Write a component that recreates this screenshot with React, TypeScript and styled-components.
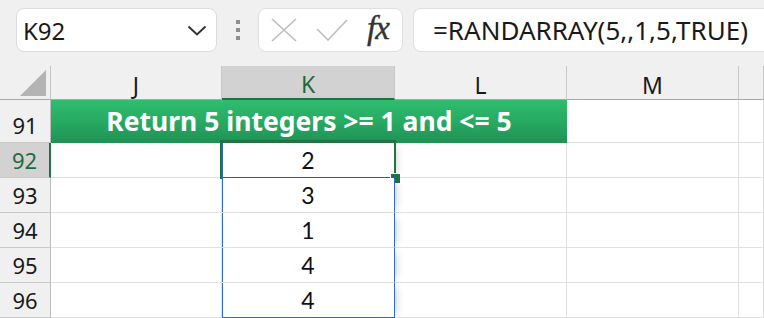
import React from 'react'
import styled, { createGlobalStyle } from 'styled-components'

const GlobalStyle = createGlobalStyle`
  html, body {
    margin: 0;
    padding: 0;
    background: #ffffff;
    overflow: hidden;
  }
  * { box-sizing: border-box; }
`

const GREEN = '#217346'
const BLUE = '#2f6bd6'
const GRID = '#e1e1e1'
const HEAD_BG = '#f0f0f0'

const Page = styled.div`
  width: 764px;
  height: 318px;
  background: ${HEAD_BG};
  overflow: hidden;
`

const Toolbar = styled.div`
  display: flex;
  align-items: flex-start;
  height: 66px;
  padding: 8px 0 0 16px;
  & > * { flex-shrink: 0; }
`

const NameBox = styled.div`
  display: flex;
  align-items: center;
  justify-content: space-between;
  width: 201px;
  height: 44px;
  padding: 0 9px 0 6px;
  background: #fff;
  border: 1px solid #dcdcdc;
  border-radius: 8px;
  font-family: "Noto Sans", "Open Sans", sans-serif;
  font-size: 24px;
  color: #1a1a1a;
`

const Grip = styled.div`
  display: flex;
  flex-direction: column;
  justify-content: space-between;
  width: 4px;
  height: 20px;
  margin: 12px 18px 0 19px;
`

const GripDot = styled.span`
  width: 4px;
  height: 4px;
  background: #8e8e8e;
`

const ActionBox = styled.div`
  display: flex;
  align-items: center;
  width: 145px;
  height: 44px;
  padding: 0 0 0 12px;
  gap: 19px;
  background: #fff;
  border: 1px solid #e0e0e0;
  border-radius: 8px;
`

const Fx = styled.span`
  font-family: "Liberation Serif", "DejaVu Serif", serif;
  font-style: italic;
  font-size: 33px;
  line-height: 1;
  color: #333;
  margin-top: -4px;
  letter-spacing: -1px;
  -webkit-text-stroke: 0.4px #333;
`

const FormulaBox = styled.div`
  display: flex;
  align-items: center;
  width: 400px;
  height: 44px;
  margin-left: 10px;
  padding-left: 19px;
  background: #fff;
  border: 1px solid #e0e0e0;
  border-radius: 8px 0 0 8px;
  border-right: none;
  font-family: "Noto Sans", "Open Sans", sans-serif;
  font-size: 26px;
  color: #1a1a1a;
  white-space: nowrap;
`

const Sheet = styled.div`
  display: grid;
  grid-template-columns: 51px 171px 173px 172px 172px 1fr;
  grid-template-rows: 34px 43px repeat(5, 35px);
  background: #fff;
`

const Corner = styled.div`
  position: relative;
  background: ${HEAD_BG};
  border-right: 1px solid #c4c4c4;
  border-bottom: 1px solid #a8a8a8;
  &::after {
    content: '';
    position: absolute;
    right: 4px;
    bottom: 3px;
    width: 0;
    height: 0;
    border-left: 26px solid transparent;
    border-bottom: 26px solid #b4b4b4;
  }
`

const ColHead = styled.div<{ $sel?: boolean }>`
  display: flex;
  align-items: center;
  justify-content: center;
  padding-top: 4px;
  font-family: "Noto Sans", "Open Sans", sans-serif;
  font-size: 23px;
  color: ${p => (p.$sel ? '#1d6b41' : '#1a1a1a')};
  background: ${p => (p.$sel ? '#d2d2d2' : HEAD_BG)};
  border-right: 1px solid #c8c8c8;
  border-bottom: ${p => (p.$sel ? `2px solid ${GREEN}` : '1px solid #a8a8a8')};
`

const RowHead = styled.div<{ $sel?: boolean }>`
  display: flex;
  align-items: flex-end;
  justify-content: center;
  padding-bottom: 2px;
  font-family: "Noto Sans", "Open Sans", sans-serif;
  font-size: 22px;
  color: ${p => (p.$sel ? '#1d6b41' : '#1a1a1a')};
  background: ${p => (p.$sel ? '#d2d2d2' : HEAD_BG)};
  border-right: ${p => (p.$sel ? `2px solid ${GREEN}` : '1px solid #bdbdbd')};
  border-bottom: 1px solid #c8c8c8;
`

const Cell = styled.div`
  border-right: 1px solid ${GRID};
  border-bottom: 1px solid ${GRID};
  background: #fff;
`

const Title = styled.div`
  grid-column: span 3;
  display: flex;
  align-items: flex-end;
  justify-content: center;
  padding-bottom: 4px;
  background: linear-gradient(180deg, #2fbd6e 0%, #27a862 55%, #1f9154 100%);
  font-family: "Noto Sans", "Open Sans", sans-serif;
  font-weight: 700;
  font-size: 26.5px;
  color: #fff;
  white-space: nowrap;
`

const SpillCell = styled.div<{ $last?: boolean }>`
  position: relative;
  z-index: 1;
  display: flex;
  align-items: flex-end;
  justify-content: center;
  padding-bottom: 3px;
  background: #fff;
  border-right: 1px solid ${BLUE};
  border-bottom: 1px solid ${p => (p.$last ? BLUE : GRID)};
  box-shadow: inset 1px 0 0 ${BLUE}, 7px 0 7px -5px rgba(0, 0, 0, 0.18);
  font-family: Lato, "Liberation Sans", sans-serif;
  font-size: 23px;
  color: #111;
`

const Selection = styled.div`
  position: absolute;
  top: -3px;
  left: -2px;
  right: -2px;
  bottom: -2px;
  border: 2px solid ${GREEN};
  border-top-width: 3px;
  pointer-events: none;
`

const FillHandle = styled.span`
  position: absolute;
  right: -6px;
  bottom: -6px;
  width: 10px;
  height: 10px;
  background: ${GREEN};
  border: 1px solid #fff;
  border-right: none;
  border-bottom: none;
`

const values = [2, 3, 1, 4, 4]
const rows = [92, 93, 94, 95, 96]

export default function App() {
  return (
    <Page>
      <GlobalStyle />
      <Toolbar>
        <NameBox>
          <span>K92</span>
          <svg width="20" height="11" viewBox="0 0 20 11">
            <path d="M1.5 1.5 L10 9.5 L18.5 1.5" fill="none" stroke="#333" strokeWidth="2" />
          </svg>
        </NameBox>
        <Grip>
          <GripDot />
          <GripDot />
          <GripDot />
        </Grip>
        <ActionBox>
          <svg width="26" height="24" viewBox="0 0 26 24">
            <path d="M1 1 L25 23 M25 1 L1 23" stroke="#bdbdbd" strokeWidth="1.6" fill="none" />
          </svg>
          <svg width="32" height="22" viewBox="0 0 32 22">
            <path d="M1 10 L12 21 L31 1" stroke="#bdbdbd" strokeWidth="1.6" fill="none" />
          </svg>
          <Fx>fx</Fx>
        </ActionBox>
        <FormulaBox>=RANDARRAY(5,,1,5,TRUE)</FormulaBox>
      </Toolbar>
      <Sheet>
        <Corner />
        <ColHead>J</ColHead>
        <ColHead $sel>K</ColHead>
        <ColHead>L</ColHead>
        <ColHead>M</ColHead>
        <ColHead />

        <RowHead>91</RowHead>
        <Title>Return 5 integers &gt;= 1 and &lt;= 5</Title>
        <Cell />
        <Cell />

        {rows.map((r, i) => (
          <React.Fragment key={r}>
            <RowHead $sel={i === 0}>{r}</RowHead>
            <Cell />
            <SpillCell $last={i === rows.length - 1}>
              {values[i]}
              {i === 0 && (
                <Selection>
                  <FillHandle />
                </Selection>
              )}
            </SpillCell>
            <Cell />
            <Cell />
            <Cell />
          </React.Fragment>
        ))}
      </Sheet>
    </Page>
  )
}
